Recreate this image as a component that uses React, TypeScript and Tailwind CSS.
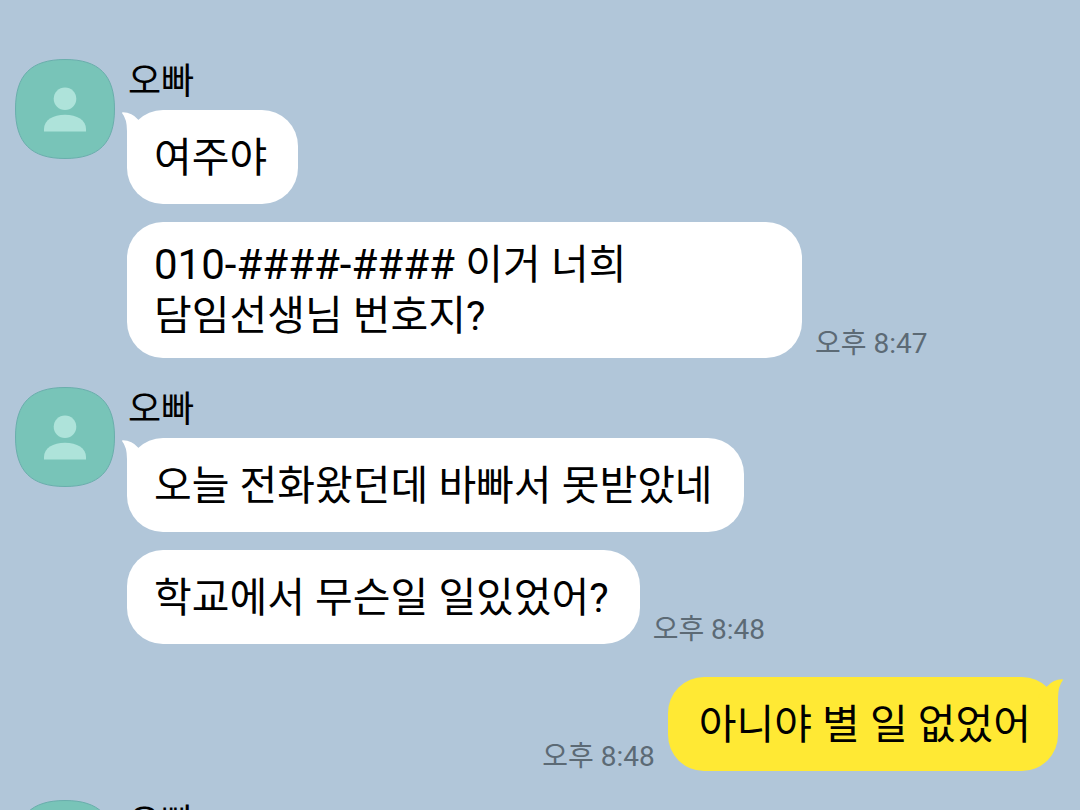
import React from "react";

type Message = { text: string; phone?: string; time?: string };

function Avatar() {
  return (
    <svg viewBox="0 0 100 100" className="size-[100px] shrink-0" aria-hidden="true">
      <path
        d="M50 .5C84 .5 99.5 16 99.5 50S84 99.5 50 99.5 .5 84 .5 50 16 .5 50 .5Z"
        fill="#78c4b8"
        stroke="#6aaeac"
      />
      <circle cx="50" cy="39.8" r="11.3" fill="#aee3da" />
      <path d="M29 72.5V70C29 61 38 55.7 50 55.7S71 61 71 70V72.5Z" fill="#aee3da" />
    </svg>
  );
}

function Tail({ mine = false }: { mine?: boolean }) {
  return (
    <svg
      viewBox="-5 0 25 36"
      className={
        mine
          ? "absolute top-0 -right-[5px] h-9 w-[25px] -scale-x-100 text-[#ffe934]"
          : "absolute top-0 -left-[5px] h-9 w-[25px] text-white"
      }
      aria-hidden="true"
    >
      <path d="M-5 3Q-5 2.2-4 2.3Q5 2.3 11.3 9.8L20 20L0 36V21Q0 9-5 3Z" fill="currentColor" />
    </svg>
  );
}

function Time({ children }: { children: string }) {
  return <time className="shrink-0 text-[28px] leading-7 text-[#5c6a75]">{children}</time>;
}

function Group({ name, messages }: { name: string; messages: Message[] }) {
  return (
    <section className="flex gap-3 pl-[15px]">
      <Avatar />
      <div className="min-w-0 flex-1">
        <h2 className="h-[51px] pl-px text-[36px] leading-[46px]">{name}</h2>
        <div className="flex flex-col gap-[18px]">
          {messages.map((message, index) => (
            <div key={message.text} className="flex items-end gap-[13px]">
              <div className="relative flex min-h-[94px] max-w-[675px] items-center rounded-[36px] bg-white pt-[18px] pr-[31px] pb-4 pl-[27px]">
                {index === 0 && <Tail />}
                <p>
                  {message.phone && (
                    <span className="text-[42px] leading-none">{message.phone} </span>
                  )}
                  {message.text}
                </p>
              </div>
              {message.time && <Time>{message.time}</Time>}
            </div>
          ))}
        </div>
      </div>
    </section>
  );
}

export default function App() {
  return (
    <main
      lang="ko"
      className="flex h-screen flex-col gap-[29px] overflow-hidden bg-[#b1c6d9] pt-[59px] font-['Roboto','Noto_Sans_CJK_KR',sans-serif] text-[41px] leading-[51px] break-keep text-black *:shrink-0"
    >
      <Group
        name="오빠"
        messages={[
          { text: "여주야" },
          { phone: "010-####-####", text: "이거 너희 담임선생님 번호지?", time: "오후 8:47" },
        ]}
      />
      <Group
        name="오빠"
        messages={[
          { text: "오늘 전화왔던데 바빠서 못받았네" },
          { text: "학교에서 무슨일 일있었어?", time: "오후 8:48" },
        ]}
      />
      <section className="flex items-end justify-end gap-[13px] pt-1 pr-[22px]">
        <Time>오후 8:48</Time>
        <div className="relative flex min-h-[94px] max-w-[675px] items-center rounded-[36px] bg-[#ffe934] pt-[18px] pr-[27px] pb-4 pl-[31px]">
          <Tail mine />
          <p>아니야 별 일 없었어</p>
        </div>
      </section>
      <Group name="오빠" messages={[]} />
    </main>
  );
}
